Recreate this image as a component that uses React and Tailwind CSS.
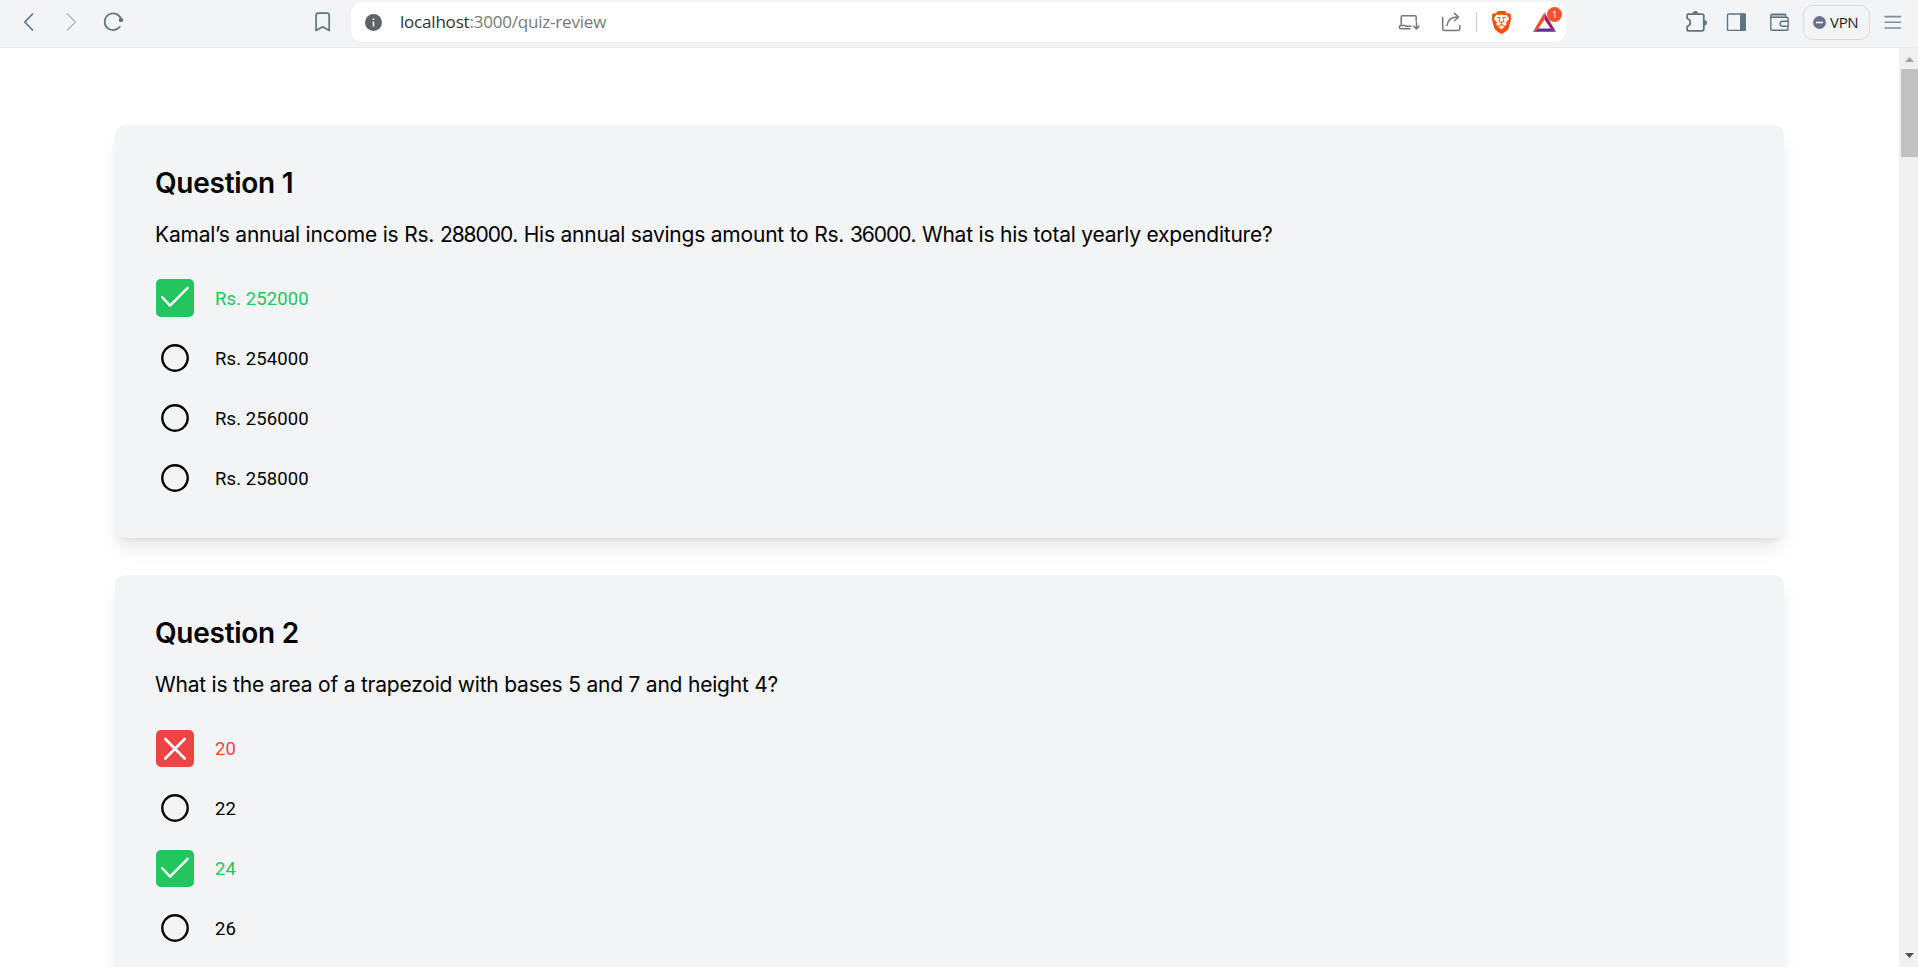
import { SiBrave } from "react-icons/si";

const questions = [
  {
    title: "Question 1",
    text: "Kamal’s annual income is Rs. 288000. His annual savings amount to Rs. 36000. What is his total yearly expenditure?",
    options: [
      { label: "Rs. 252000", state: "correct" },
      { label: "Rs. 254000" },
      { label: "Rs. 256000" },
      { label: "Rs. 258000" },
    ],
  },
  {
    title: "Question 2",
    text: "What is the area of a trapezoid with bases 5 and 7 and height 4?",
    options: [
      { label: "20", state: "wrong" },
      { label: "22" },
      { label: "24", state: "correct" },
      { label: "26" },
    ],
  },
];

// Numbers are set a little tighter than the words around them.
function withTightNumbers(text) {
  return text.split(/(\d{2,})/).map((part, i) =>
    i % 2 ? (
      <span key={i} className="tracking-[-1.05px]">
        {part}
      </span>
    ) : (
      part
    )
  );
}

function Mark({ state }) {
  if (state === "correct") {
    return (
      <div className="h-[37.5px] w-[38px] shrink-0 rounded-[5px] bg-[#22c55e]">
        <svg viewBox="0 0 38 38" className="block h-[37.5px] w-[38px]" fill="none" stroke="#fff" strokeWidth="2.5" strokeLinecap="round" strokeLinejoin="round">
          <path d="M6 18.5 L14 27 L31.8 9" />
        </svg>
      </div>
    );
  }
  if (state === "wrong") {
    return (
      <div className="h-[37.5px] w-[38px] shrink-0 rounded-[5px] bg-[#ef4444]">
        <svg viewBox="0 0 38 38" className="block h-[37.5px] w-[38px]" fill="none" stroke="#fff" strokeWidth="2.8" strokeLinecap="round">
          <path d="M9.2 9.2 L28.8 28.8 M28.8 9.2 L9.2 28.8" />
        </svg>
      </div>
    );
  }
  return (
    <div className="flex h-[37.5px] w-[38px] shrink-0 items-center justify-center">
      <svg viewBox="0 0 28 28" className="size-7" fill="none" stroke="#000" strokeWidth="2.4">
        <circle cx="14" cy="14" r="12.7" />
      </svg>
    </div>
  );
}

function QuestionCard({ q }) {
  return (
    <section className="h-[413px] shrink-0 rounded-[10px] bg-[#f3f4f6] px-10 pt-10 shadow-[0_12.5px_18.75px_-3.75px_rgb(0_0_0/0.1),0_5px_7.5px_-5px_rgb(0_0_0/0.1)]">
      <h2 className="h-9 text-[28px] leading-9 font-semibold tracking-[-0.27px]">{q.title}</h2>
      <p className="mt-5 h-7 text-[21px] leading-7 tracking-[-0.215px] whitespace-nowrap">{withTightNumbers(q.text)}</p>
      <ul className="mt-[30.3px] flex flex-col gap-[22.5px] pl-px">
        {q.options.map((o) => (
          <li key={o.label} className="flex items-center gap-[21px]">
            <Mark state={o.state} />
            <span
              className={`pt-0.5 font-['Roboto',sans-serif] text-[18.5px] leading-7 tracking-[0.1px] ${
                o.state === "correct" ? "text-[#22c55e]" : o.state === "wrong" ? "text-[#ef4444]" : "text-black"
              }`}
            >
              {o.label}
            </span>
          </li>
        ))}
      </ul>
    </section>
  );
}

function Toolbar() {
  return (
    <header className="flex h-12 shrink-0 items-start border-b border-[#e6e8ea] bg-[#f3f4f6] font-['Open_Sans',sans-serif]">
      <div className="flex h-11 w-[351px] shrink-0 items-center">
        <svg viewBox="0 0 351 44" className="h-11 w-[351px]" fill="none" stroke="#5f7481" strokeWidth="1.7" strokeLinecap="round" strokeLinejoin="round">
          <path d="M32.5 14 L24.8 22 L32.5 30" />
          <path d="M67.5 14 L75.5 22 L67.5 30" stroke="#b3bec5" />
          <path d="M119.8 26.8 A8.4 8.4 0 1 1 120.6 18" />
          <circle cx="121" cy="19.9" r="2.2" fill="#5f7481" stroke="none" />
          <path d="M318.5 13.2 H327 Q329.2 13.2 329.2 15.4 V30.6 L322.7 26.8 L316.1 30.6 V15.4 Q316.1 13.2 318.5 13.2 Z" />
        </svg>
      </div>
      <div className="mt-0.5 flex h-10 w-[1215px] shrink-0 items-center rounded-xl bg-white pl-[14px]">
        <svg viewBox="0 0 17 17" className="size-[17px] shrink-0">
          <circle cx="8.5" cy="8.5" r="8.5" fill="#5f6368" />
          <path d="M8.5 7.5 V12.5 M8.5 4.4 V6" stroke="#fff" strokeWidth="1.5" />
        </svg>
        <div className="ml-[18px] w-[998px] text-[17px] leading-6 tracking-[-0.2px] whitespace-nowrap text-[#77797c]">
          <span className="text-[#303236]">localhost</span>:3000/quiz-review
        </div>
        <svg viewBox="1398 2 168 40" className="h-10 w-[168px] shrink-0" fill="none" stroke="#777" strokeWidth="1.5" strokeLinecap="round" strokeLinejoin="round">
          <path d="M1416.2 21 V17 Q1416.2 15.7 1415 15.7 H1402.5 Q1401.2 15.7 1401.2 17 V25.5 M1410 28.8 H1400.8 Q1399.5 28.8 1399.5 27.5 V26.5 Q1399.5 25.5 1401 25.5 H1405 L1406 26.3 H1411" />
          <path d="M1416.5 22.5 V28.5 M1413.7 26 L1416.5 28.9 L1419 26" />
          <path d="M1442.7 17.5 V28.5 Q1442.7 30.5 1444.7 30.5 H1457.8 Q1459.8 30.5 1459.8 28.5 V25.5" />
          <path d="M1447 25.5 Q1448 17 1458 17 M1454.5 13.4 L1458.5 17 L1454.5 20.7" />
          <path d="M1476.5 12.5 V31.5" stroke="#ccced0" strokeWidth="1.2" />
        </svg>
      </div>
      <div className="relative size-0">
        <SiBrave className="absolute top-[11px] left-[-76.5px] h-[23px] w-[23px] text-[#fb5004]" />
        <svg viewBox="0 0 34 26" className="absolute top-[7px] left-[-35px] h-[26px] w-[34px]">
          <path d="M13.5 5.5 V12.5 L7.3 21.5 L2 24.8 Z" fill="#ff4724" />
          <path d="M13.5 5.5 L25 24.8 L19.5 21.5 L13.5 12.5 Z" fill="#9e1f63" />
          <path d="M2 24.8 L7.3 21.5 H19.5 L25 24.8 Z" fill="#662d91" />
        </svg>
        <div className="absolute top-[7px] left-[-19px] flex size-[15px] items-center justify-center rounded-full bg-[#fb542b] text-[9px] leading-none text-white">
          1
        </div>
      </div>
      <svg viewBox="1566 0 238 46" className="h-[46px] w-[238px] shrink-0" fill="none" stroke="#5f7481" strokeWidth="1.8" strokeLinejoin="round">
        <path d="M1688 14.2 H1702 Q1703.8 14.2 1703.8 16 V28.8 Q1703.8 30.8 1702 30.8 H1688 Q1687.2 30.8 1687.2 30 V26.5 Q1690.3 25.5 1690.3 22.5 Q1690.3 19.5 1687.2 18.5 V15 Q1687.2 14.2 1688 14.2 Z" />
        <path d="M1692.6 13.8 A2.8 2.8 0 0 1 1698.2 13.8 Z M1704.2 20 A2.8 2.8 0 0 1 1704.2 25.6 Z" fill="#5f7481" stroke="none" />
        <rect x="1727.5" y="14" width="17.6" height="16.4" rx="1" strokeWidth="1.4" />
        <rect x="1740" y="13.4" width="5.7" height="17.6" rx="0.8" fill="#5f7481" stroke="none" />
        <path d="M1771 14.5 H1784.5 Q1786 14.5 1786 16.5 H1771 Z" fill="#aab5bd" stroke="none" />
        <path d="M1788 21.2 V18.5 Q1788 17.3 1786.5 17.3 H1770.8 V15.5 Q1770.8 14.2 1772 14.2 H1784.5 Q1785.8 14.2 1785.8 15.6 V17 M1770.8 17 V29 Q1770.8 30.3 1772 30.3 H1786.8 Q1788 30.3 1788 29 V26.3 M1788.2 21.2 H1782.5 Q1780.2 21.2 1780.2 23.7 Q1780.2 26.3 1782.5 26.3 H1788.2 Z" strokeWidth="1.4" />
      </svg>
      <div className="mt-[5px] -ml-px flex h-[35px] w-[67px] shrink-0 items-center rounded-[10px] border border-[#d3dce3] pl-[9px]">
        <svg viewBox="0 0 13 13" className="size-[13px] shrink-0">
          <circle cx="6.5" cy="6.5" r="6.4" fill="#6b6f8d" />
          <path d="M3 6.5 H10" stroke="#fff" strokeWidth="1.6" />
        </svg>
        <span className="ml-[4px] pb-0.5 text-[15px] leading-5 tracking-[-0.3px] text-[#1c1e26]">VPN</span>
      </div>
      <svg viewBox="0 0 18 14" className="mt-[15px] ml-[14px] h-[14px] w-[18px]" fill="none" stroke="#7c8e99" strokeWidth="1.6" strokeLinecap="round">
        <path d="M1 1.6 H16.5 M1 7.3 H16.5 M1 13 H16.5" />
      </svg>
    </header>
  );
}

export default function App() {
  return (
    <div className="flex h-[967px] w-[1918px] flex-col overflow-hidden bg-white font-['Inter',sans-serif] text-black">
      <Toolbar />
      <div className="flex min-h-0 flex-1">
        <main className="flex min-w-0 flex-1 flex-col gap-[37.3px] overflow-hidden pt-[77px] pr-[115px] pl-[115px]">
          {questions.map((q) => (
            <QuestionCard key={q.title} q={q} />
          ))}
        </main>
        <div className="flex w-[19px] shrink-0 flex-col items-end bg-[#f0f0f0]">
          <svg viewBox="0 0 17 21" className="h-[21px] w-[17px] shrink-0">
            <path d="M8.5 9 L13 14 H4 Z" fill="#a3a3a3" />
          </svg>
          <div className="h-[88px] w-[17px] shrink-0 bg-[#c1c1c1]" />
          <div className="flex-1" />
          <svg viewBox="0 0 17 21" className="h-[21px] w-[17px] shrink-0">
            <path d="M4 7 H13 L8.5 12 Z" fill="#505050" />
          </svg>
        </div>
      </div>
    </div>
  );
}
